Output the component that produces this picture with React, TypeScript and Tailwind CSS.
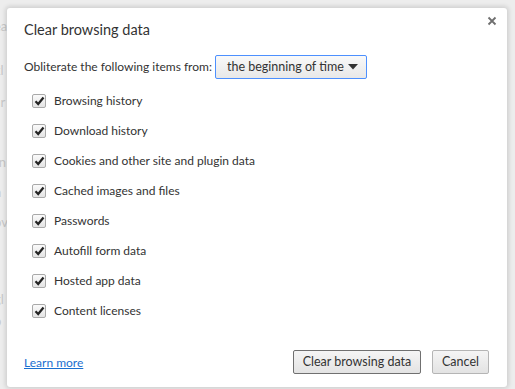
const ITEMS = [
  "Browsing history",
  "Download history",
  "Cookies and other site and plugin data",
  "Cached images and files",
  "Passwords",
  "Autofill form data",
  "Hosted app data",
  "Content licenses",
];

// fragments of the page behind the overlay, cut off at the left edge
const BEHIND = [
  { top: 17, text: "ea" },
  { top: 61, text: "kl" },
  { top: 93, text: "ar" },
  { top: 124, text: "s" },
  { top: 153, text: "rn" },
  { top: 183, text: "h" },
  { top: 213, text: "ov" },
  { top: 290, text: "gl" },
  { top: 312, text: "p" },
];

function Check() {
  return (
    <span className="flex h-[14px] w-[14px] items-center justify-center rounded-[2px] border border-[#a9a9a9] bg-gradient-to-b from-[#fafafa] to-[#e4e4e4]">
      <svg width="11" height="10" viewBox="0 0 11 10">
        <path d="M1.5 5.2 L4.2 8 L9.5 1.5" fill="none" stroke="#222" strokeWidth="2.2" />
      </svg>
    </span>
  );
}

export default function App() {
  return (
    <div
      className="relative flex h-[389px] w-[515px] overflow-hidden bg-[#ededed] text-[#333]"
      style={{ fontFamily: 'Lato, "Open Sans", sans-serif' }}
    >
      {BEHIND.map((b) => (
        <span
          key={b.top}
          className="absolute left-[-6px] text-[13px] text-[#c8c8c8]"
          style={{ top: b.top }}
        >
          {b.text}
        </span>
      ))}
      <div className="relative ml-[7px] mt-[8px] flex h-[379px] w-[500px] flex-col rounded-[3px] bg-white shadow-[0_0_4px_2px_rgba(0,0,0,0.12)]">
        <button className="absolute right-[10px] top-[8px]">
          <svg width="10" height="10" viewBox="0 0 10 10">
            <path d="M1.5 1.5 L8.5 8.5 M8.5 1.5 L1.5 8.5" stroke="#6f6f6f" strokeWidth="1.8" />
          </svg>
        </button>
        <div className="pl-[17px] pt-[12px] text-[14.5px] leading-[20px]">Clear browsing data</div>
        <div className="mt-[15px] flex items-center whitespace-nowrap pl-[17px] text-[12px]">
          <span>Obliterate the following items from:</span>
          <div className="ml-[3px] flex h-[24px] w-[152px] items-center justify-between rounded-[2px] border border-[#4d90fe] bg-gradient-to-b from-[#f9f9f9] to-[#e8e8e8] pl-[11px] pr-[8px] text-[12.5px]">
            <span>the beginning of time</span>
            <svg width="10" height="6" viewBox="0 0 10 6">
              <path d="M0 0 H10 L5 5.5 Z" fill="#333" />
            </svg>
          </div>
        </div>
        <div className="mt-[7px] flex flex-col pl-[25px] text-[12px]">
          {ITEMS.map((it) => (
            <label key={it} className="flex h-[30px] items-center gap-[8px]">
              <Check />
              <span>{it}</span>
            </label>
          ))}
        </div>
        <div className="mt-auto flex items-center pb-[13px] pl-[17px] pr-[18px] text-[12px]">
          <a className="mt-[2px] text-[#1a6fd0] underline">Learn more</a>
          <div className="ml-auto flex gap-[11px]">
            <button className="h-[24px] w-[128px] rounded-[2px] border border-[#707070] bg-gradient-to-b from-[#f5f5f5] to-[#e3e3e3] text-[12.5px]">
              Clear browsing data
            </button>
            <button className="h-[24px] w-[57px] rounded-[2px] border border-[#b5b5b5] bg-gradient-to-b from-[#f5f5f5] to-[#e3e3e3] text-[12.5px]">
              Cancel
            </button>
          </div>
        </div>
      </div>
    </div>
  );
}
